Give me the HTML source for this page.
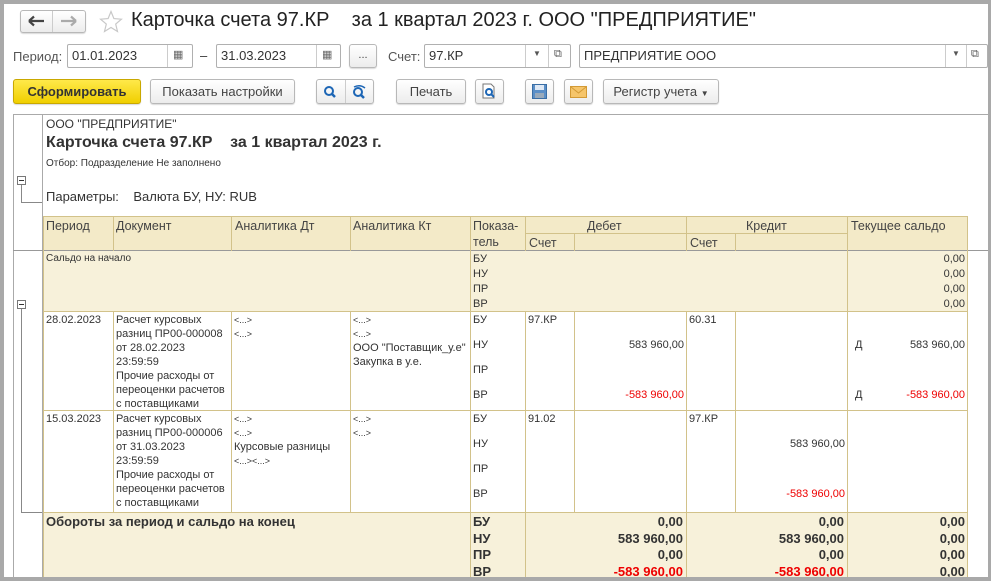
<!DOCTYPE html>
<html><head><meta charset="utf-8"><style>
*{box-sizing:border-box;margin:0;padding:0}
body{width:991px;height:581px;overflow:hidden;background:#a9a9a9;font-family:"Liberation Sans",sans-serif;color:#333;position:relative}
#win{position:absolute;left:4px;top:4px;width:984px;height:573px;background:#fff;overflow:hidden}
.a{position:absolute;white-space:nowrap}
.btn{position:absolute;border:1px solid #b8b8b8;border-radius:3px;background:linear-gradient(#fff,#ececec);font-size:13px;color:#444;text-align:center;box-shadow:0 1px 1px rgba(0,0,0,.15)}
.inp{position:absolute;border:1px solid #b0b0b0;border-radius:2px;background:#fff;font-size:13px;color:#333;height:24px;line-height:22px;padding-left:4px}
.f{position:absolute}
.vl{position:absolute;width:1px;background:#d2c28a}
.hl{position:absolute;height:1px;background:#d2c28a}
.t{position:absolute;font-size:11px;color:#333;white-space:nowrap;line-height:14px}
.h{position:absolute;font-size:12.5px;color:#444;white-space:nowrap}
.r{text-align:right}
.red{color:#e00}
.b{font-weight:bold;font-size:13px;color:#333}
</style></head><body>
<div id="win">
<div class="btn" style="left:16px;top:6px;width:66px;height:23px"></div>
<div class="f" style="left:48px;top:7px;width:1px;height:21px;background:#ccc"></div>
<svg class="f" style="left:24px;top:11px" width="18" height="12"><path d="M1 6H16M1 6L6 1.5M1 6L6 10.5" fill="none" stroke="#444" stroke-width="2.2"/></svg>
<svg class="f" style="left:56px;top:11px" width="18" height="12"><path d="M1 6H16M16 6L11 1.5M16 6L11 10.5" fill="none" stroke="#aaa" stroke-width="2.2"/></svg>
<svg class="f" style="left:95px;top:6px" width="24" height="23"><path d="M12 1.5L14.9 8.6 22.4 9.2 16.7 14.1 18.5 21.5 12 17.5 5.5 21.5 7.3 14.1 1.6 9.2 9.1 8.6Z" fill="none" stroke="#c8c8c8" stroke-width="1.2"/></svg>
<div class="a" style="left:127px;top:5px;font-size:20px;color:#222">Карточка счета 97.КР&nbsp;&nbsp;&nbsp; за 1 квартал 2023 г. ООО "ПРЕДПРИЯТИЕ"</div>

<div class="a" style="left:9px;top:45px;font-size:13px;color:#555">Период:</div>
<div class="inp" style="left:63px;top:40px;width:126px">01.01.2023</div>
<div class="f" style="left:163px;top:41px;width:1px;height:22px;background:#ccc"></div>
<div class="a" style="left:169px;top:44px;font-size:11px;color:#666">▦</div>
<div class="a" style="left:196px;top:44px;font-size:13px">–</div>
<div class="inp" style="left:212px;top:40px;width:125px">31.03.2023</div>
<div class="f" style="left:312px;top:41px;width:1px;height:22px;background:#ccc"></div>
<div class="a" style="left:318px;top:44px;font-size:11px;color:#666">▦</div>
<div class="btn" style="left:345px;top:40px;width:28px;height:24px;font-size:11px;line-height:20px">...</div>
<div class="a" style="left:384px;top:45px;font-size:13px;color:#555">Счет:</div>
<div class="inp" style="left:420px;top:40px;width:147px">97.КР</div>
<div class="f" style="left:521px;top:41px;width:1px;height:22px;background:#ccc"></div>
<div class="f" style="left:544px;top:41px;width:1px;height:22px;background:#ccc"></div>
<div class="a" style="left:529px;top:45px;font-size:8px;color:#555">▼</div>
<div class="a" style="left:550px;top:44px;font-size:11px;color:#555">⧉</div>
<div class="inp" style="left:575px;top:40px;width:409px">ПРЕДПРИЯТИЕ ООО</div>
<div class="f" style="left:941px;top:41px;width:1px;height:22px;background:#ccc"></div>
<div class="f" style="left:962px;top:41px;width:1px;height:22px;background:#ccc"></div>
<div class="a" style="left:948px;top:45px;font-size:8px;color:#555">▼</div>
<div class="a" style="left:967px;top:44px;font-size:11px;color:#555">⧉</div>

<div class="btn" style="left:9px;top:75px;width:128px;height:25px;background:linear-gradient(#ffe94a,#f0cf00);border-color:#c9a800;font-weight:bold;line-height:23px;color:#333">Сформировать</div>
<div class="btn" style="left:146px;top:75px;width:145px;height:25px;line-height:23px">Показать настройки</div>
<div class="btn" style="left:312px;top:75px;width:58px;height:25px"></div>
<div class="f" style="left:341px;top:76px;width:1px;height:23px;background:#ccc"></div>
<svg class="f" style="left:318px;top:80px" width="16" height="16"><circle cx="7" cy="7" r="4" fill="none" stroke="#1d66b5" stroke-width="2"/><line x1="10" y1="10" x2="13" y2="13" stroke="#1d66b5" stroke-width="2.5"/></svg>
<svg class="f" style="left:347px;top:80px" width="18" height="16"><circle cx="7" cy="8" r="4" fill="none" stroke="#1d66b5" stroke-width="2"/><line x1="10" y1="11" x2="13" y2="14" stroke="#1d66b5" stroke-width="2.5"/><path d="M3 3 Q9 0 14 4" fill="none" stroke="#1d66b5" stroke-width="1.5"/></svg>
<div class="btn" style="left:392px;top:75px;width:70px;height:25px;line-height:23px">Печать</div>
<div class="btn" style="left:471px;top:75px;width:29px;height:25px"></div>
<svg class="f" style="left:477px;top:79px" width="16" height="17"><path d="M2 1h8l3 3v11H2z" fill="#fff" stroke="#777"/><circle cx="8" cy="9" r="3" fill="none" stroke="#1d66b5" stroke-width="2"/><line x1="10" y1="11" x2="13" y2="14" stroke="#1d66b5" stroke-width="2"/></svg>
<div class="btn" style="left:521px;top:75px;width:29px;height:25px"></div>
<svg class="f" style="left:528px;top:80px" width="15" height="15"><rect x="0.5" y="0.5" width="14" height="14" fill="#5b8fc7" stroke="#3a6ea5"/><rect x="3" y="1" width="9" height="5" fill="#dfe9f5"/><rect x="3" y="9" width="9" height="5" fill="#9ab"/></svg>
<div class="btn" style="left:560px;top:75px;width:29px;height:25px"></div>
<svg class="f" style="left:566px;top:82px" width="17" height="12"><rect x="0.5" y="0.5" width="16" height="11" fill="#f6c56a" stroke="#d39a35"/><path d="M1 1l7.5 6L16 1" fill="none" stroke="#d39a35"/></svg>
<div class="btn" style="left:599px;top:75px;width:116px;height:25px;line-height:23px">Регистр учета <span style="font-size:8px">▼</span></div>

<div class="f" style="left:9px;top:110px;width:975px;height:1px;background:#aaa"></div>
<div class="f" style="left:9px;top:110px;width:1px;height:470px;background:#aaa"></div>
<div class="a" style="left:42px;top:113px;font-size:12px;color:#333">ООО "ПРЕДПРИЯТИЕ"</div>
<div class="a" style="left:42px;top:130px;font-size:16px;font-weight:bold;color:#333">Карточка счета 97.КР&nbsp;&nbsp;&nbsp; за 1 квартал 2023 г.</div>
<div class="a" style="left:42px;top:154px;font-size:10px;color:#333">Отбор: Подразделение Не заполнено</div>
<div class="a" style="left:42px;top:185px;font-size:13px;color:#333">Параметры:&nbsp;&nbsp;&nbsp; Валюта БУ, НУ: RUB</div>
<div class="f" style="left:13px;top:172px;width:9px;height:9px;border:1px solid #777;background:#fff"></div>
<div class="f" style="left:15px;top:176px;width:5px;height:1px;background:#333"></div>
<div class="f" style="left:17px;top:181px;width:1px;height:17px;background:#888"></div>
<div class="f" style="left:17px;top:198px;width:21px;height:1px;background:#888"></div>
<div class="f" style="left:38px;top:110px;width:1px;height:470px;background:#aaa"></div>
<div class="f" style="left:9px;top:246px;width:975px;height:1px;background:#999"></div>
<div class="f" style="left:13px;top:296px;width:9px;height:9px;border:1px solid #777;background:#fff"></div>
<div class="f" style="left:15px;top:300px;width:5px;height:1px;background:#333"></div>
<div class="f" style="left:17px;top:305px;width:1px;height:204px;background:#888"></div>
<div class="f" style="left:17px;top:508px;width:21px;height:1px;background:#888"></div>

<div class="f" style="left:39px;top:213px;width:924px;height:33px;background:#f3eac8"></div>
<div class="f" style="left:39px;top:247px;width:924px;height:60px;background:#f7f1da"></div>
<div class="f" style="left:39px;top:508px;width:924px;height:66px;background:#f7f1da"></div>

<div class="hl" style="left:39px;top:212px;width:924px"></div>
<div class="hl" style="left:521px;top:229px;width:322px"></div>
<div class="hl" style="left:39px;top:307px;width:924px"></div>
<div class="hl" style="left:39px;top:406px;width:924px"></div>
<div class="hl" style="left:39px;top:508px;width:924px"></div>
<div class="vl" style="left:39px;top:212px;height:362px"></div>
<div class="vl" style="left:109px;top:212px;height:35px"></div>
<div class="vl" style="left:227px;top:212px;height:35px"></div>
<div class="vl" style="left:346px;top:212px;height:35px"></div>
<div class="vl" style="left:109px;top:307px;height:201px"></div>
<div class="vl" style="left:227px;top:307px;height:201px"></div>
<div class="vl" style="left:346px;top:307px;height:201px"></div>
<div class="vl" style="left:466px;top:212px;height:362px"></div>
<div class="vl" style="left:521px;top:212px;height:35px"></div>
<div class="vl" style="left:521px;top:307px;height:267px"></div>
<div class="vl" style="left:570px;top:229px;height:18px"></div>
<div class="vl" style="left:570px;top:307px;height:201px"></div>
<div class="vl" style="left:682px;top:212px;height:35px"></div>
<div class="vl" style="left:682px;top:307px;height:267px"></div>
<div class="vl" style="left:731px;top:229px;height:18px"></div>
<div class="vl" style="left:731px;top:307px;height:201px"></div>
<div class="vl" style="left:843px;top:212px;height:362px"></div>
<div class="vl" style="left:963px;top:212px;height:362px"></div>

<div class="h" style="left:42px;top:215px">Период</div>
<div class="h" style="left:112px;top:215px">Документ</div>
<div class="h" style="left:231px;top:215px">Аналитика Дт</div>
<div class="h" style="left:349px;top:215px">Аналитика Кт</div>
<div class="h" style="left:469px;top:215px">Показа-</div>
<div class="h" style="left:469px;top:231px">тель</div>
<div class="h" style="left:583px;top:215px">Дебет</div>
<div class="h" style="left:742px;top:215px">Кредит</div>
<div class="h" style="left:847px;top:215px">Текущее сальдо</div>
<div class="h" style="left:525px;top:232px">Счет</div>
<div class="h" style="left:686px;top:232px">Счет</div>

<div class="t" style="left:42px;top:248px;font-size:10px">Сальдо на начало</div>
<div class="t" style="left:469px;top:248px;line-height:15px">БУ<br>НУ<br>ПР<br>ВР</div>
<div class="t r" style="left:880px;top:248px;width:81px;line-height:15px">0,00<br>0,00<br>0,00<br>0,00</div>

<div class="t" style="left:42px;top:309px">28.02.2023</div>
<div class="t" style="left:112px;top:309px;line-height:14px">Расчет курсовых<br>разниц ПР00-000008<br>от 28.02.2023<br>23:59:59<br>Прочие расходы от<br>переоценки расчетов<br>с поставщиками</div>
<div class="t" style="left:230px;top:309px;font-size:9px">&lt;...&gt;<br>&lt;...&gt;</div>
<div class="t" style="left:349px;top:309px;font-size:9px">&lt;...&gt;<br>&lt;...&gt;</div>
<div class="t" style="left:349px;top:337px">ООО "Поставщик_у.е"<br>Закупка в у.е.</div>
<div class="t" style="left:469px;top:304px;line-height:25px">БУ<br>НУ<br>ПР<br>ВР</div>
<div class="t" style="left:524px;top:309px">97.КР</div>
<div class="t" style="left:685px;top:309px">60.31</div>
<div class="t r" style="left:572px;top:334px;width:108px">583 960,00</div>
<div class="t r red" style="left:572px;top:384px;width:108px">-583 960,00</div>
<div class="t" style="left:851px;top:334px">Д</div>
<div class="t r" style="left:880px;top:334px;width:81px">583 960,00</div>
<div class="t" style="left:851px;top:384px">Д</div>
<div class="t r red" style="left:870px;top:384px;width:91px">-583 960,00</div>

<div class="t" style="left:42px;top:408px">15.03.2023</div>
<div class="t" style="left:112px;top:408px;line-height:14px">Расчет курсовых<br>разниц ПР00-000006<br>от 31.03.2023<br>23:59:59<br>Прочие расходы от<br>переоценки расчетов<br>с поставщиками</div>
<div class="t" style="left:230px;top:408px;font-size:9px">&lt;...&gt;<br>&lt;...&gt;</div>
<div class="t" style="left:230px;top:436px">Курсовые разницы</div>
<div class="t" style="left:230px;top:450px;font-size:9px">&lt;...&gt;&lt;...&gt;</div>
<div class="t" style="left:349px;top:408px;font-size:9px">&lt;...&gt;<br>&lt;...&gt;</div>
<div class="t" style="left:469px;top:403px;line-height:25px">БУ<br>НУ<br>ПР<br>ВР</div>
<div class="t" style="left:524px;top:408px">91.02</div>
<div class="t" style="left:685px;top:408px">97.КР</div>
<div class="t r" style="left:733px;top:433px;width:108px">583 960,00</div>
<div class="t r red" style="left:733px;top:483px;width:108px">-583 960,00</div>

<div class="a b" style="left:42px;top:510px">Обороты за период и сальдо на конец</div>
<div class="a b" style="left:469px;top:510px;line-height:16.5px">БУ<br>НУ<br>ПР<br>ВР</div>
<div class="a b r" style="left:560px;top:510px;width:119px;line-height:16.5px">0,00<br>583 960,00<br>0,00<br><span class="red">-583 960,00</span></div>
<div class="a b r" style="left:720px;top:510px;width:120px;line-height:16.5px">0,00<br>583 960,00<br>0,00<br><span class="red">-583 960,00</span></div>
<div class="a b r" style="left:880px;top:510px;width:81px;line-height:16.5px">0,00<br>0,00<br>0,00<br>0,00</div>
</div>
</body></html>
